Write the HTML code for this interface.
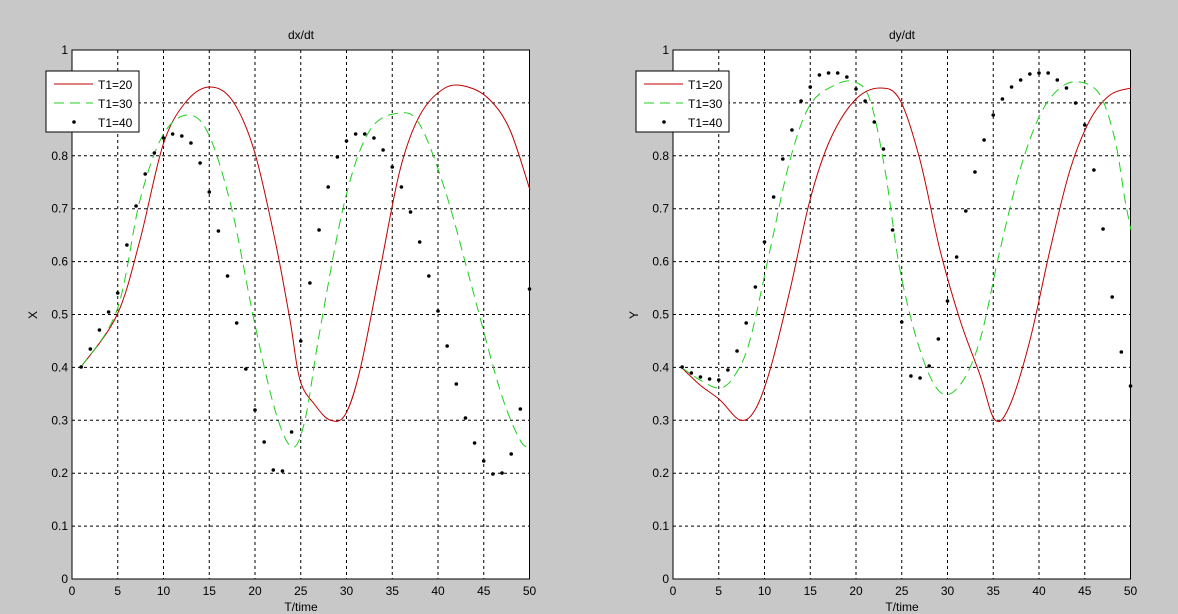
<!DOCTYPE html>
<html><head><meta charset="utf-8"><style>
html,body{margin:0;padding:0;background:#c8c8c8;}
svg{display:block;font-family:"Liberation Sans",sans-serif;}
</style></head><body>
<svg id="s" width="1178" height="614" xmlns="http://www.w3.org/2000/svg">
<rect width="1178" height="614" fill="#c8c8c8"/>
<g id="g"></g>
</svg>
<script>
var NS="http://www.w3.org/2000/svg",g=document.getElementById('g');
function el(t,a,txt){var e=document.createElementNS(NS,t);for(var k in a)e.setAttribute(k,a[k]);if(txt!=null)e.textContent=txt;g.appendChild(e);return e;}
function axes(x0,title,yl){
 var x1=x0+457.5,y0=50,y1=579;
 el('rect',{x:x0,y:y0,width:x1-x0,height:y1-y0,fill:'#fff'});
 for(var i=1;i<10;i++){var x=x0+i*45.75;el('line',{x1:x,y1:y0,x2:x,y2:y1,stroke:'#000','stroke-dasharray':'3,3','stroke-width':1});}
 for(var j=1;j<10;j++){var y=y1-j*52.9;el('line',{x1:x0,y1:y,x2:x1,y2:y,stroke:'#000','stroke-dasharray':'3,3','stroke-width':1});}
 el('rect',{x:x0,y:y0,width:x1-x0,height:y1-y0,fill:'none',stroke:'#000','stroke-width':1});
 for(var i=0;i<=10;i++){var x=x0+i*45.75;el('text',{x:x,y:595,'font-size':12,'text-anchor':'middle'},String(i*5));}
 for(var j=0;j<=10;j++){var y=y1-j*52.9;var l=j==0?'0':j==10?'1':'0.'+j;el('text',{x:x0-4,y:y+4,'font-size':12,'text-anchor':'end'},l);}
 el('text',{x:x0+229,y:39,'font-size':12,'text-anchor':'middle'},title);
 el('text',{x:x0+229,y:611,'font-size':12,'text-anchor':'middle'},'T/time');
 el('text',{x:0,y:0,'font-size':12,'text-anchor':'middle',transform:'translate('+(x0-35)+',315) rotate(-90)'},yl);
}
function smooth(p){var d='M'+p[0][0]+','+p[0][1];for(var i=0;i<p.length-1;i++){var a=p[i-1]||p[i],b=p[i],c=p[i+1],e=p[i+2]||c;
 d+=' C'+(b[0]+(c[0]-a[0])/6)+','+(b[1]+(c[1]-a[1])/6)+' '+(c[0]-(e[0]-b[0])/6)+','+(c[1]-(e[1]-b[1])/6)+' '+c[0]+','+c[1];}return d;}
function legend(x,y){
 el('rect',{x:x,y:y,width:93,height:61,fill:'#fff',stroke:'#000'});
 el('line',{x1:x+8,y1:y+13,x2:x+47,y2:y+13,stroke:'#c00000'});
 el('line',{x1:x+8,y1:y+32,x2:x+47,y2:y+32,stroke:'#20d020','stroke-dasharray':'10,6'});
 el('circle',{cx:x+28,cy:y+51,r:1.8,fill:'#000'});
 el('text',{x:x+52,y:y+18,'font-size':12},'T1=20');
 el('text',{x:x+52,y:y+37,'font-size':12},'T1=30');
 el('text',{x:x+52,y:y+56,'font-size':12},'T1=40');
}
function dots(x0,ys){for(var i=0;i<ys.length;i++)el('circle',{cx:x0+(i+1)*9.15,cy:ys[i],r:1.8,fill:'#000'});}
axes(72,'dx/dt','X');axes(673,'dy/dt','Y');
el('path',{d:smooth([[81,367],[117,315],[140,240],[163,145],[185,103],[209,87],[232,100],[254,150],[275,240],[290,320],[300,380],[315,405],[330,420],[345,415],[360,370],[380,270],[400,170],[420,115],[445,88],[468,87],[490,100],[510,130],[530,190]]),fill:'none',stroke:'#c00000'});
el('path',{d:smooth([[81,367],[117,310],[140,200],[163,135],[188,115],[209,135],[232,210],[254,320],[275,410],[292,447],[305,420],[320,330],[345,200],[370,130],[400,113],[420,125],[445,190],[470,280],[500,390],[520,440],[530,447]]),fill:'none',stroke:'#20d020','stroke-dasharray':'10,6'});
dots(72,[367,349,330,312,293,245,206,174,153,138,134,136,143,163,192,231,276,323,369,410,442,470,471,432,341,283,230,187,157,141,134,134,138,150,167,187,212,242,276,311,346,384,418,443,461,474,473,454,409,289]);
el('path',{d:smooth([[681,367],[700,385],[720,400],[740,420],[755,410],[770,370],[790,290],[810,200],[830,140],[855,100],[880,88],[900,100],[920,160],[940,250],[960,320],[980,375],[995,420],[1010,405],[1030,340],[1050,250],[1070,170],[1090,120],[1110,95],[1131,88]]),fill:'none',stroke:'#c00000'});
el('path',{d:smooth([[681,367],[700,380],[720,388],[735,375],[750,340],[770,250],[790,160],[810,105],[835,85],[855,82],[870,100],[885,170],[900,270],[920,350],[940,392],[960,385],[980,340],[1000,250],[1020,170],[1040,115],[1060,88],[1080,82],[1100,95],[1115,140],[1125,200],[1131,230]]),fill:'none',stroke:'#20d020','stroke-dasharray':'10,6'});
dots(673,[367,373,377,379,380,370,351,323,287,242,197,159,130,101,87,75,73,73,77,89,101,122,149,230,322,376,378,366,339,301,257,211,172,140,115,99,87,80,74,73,73,80,88,103,125,170,229,297,352,386]);
legend(46,71);legend(636,71);
</script>
</body></html>
